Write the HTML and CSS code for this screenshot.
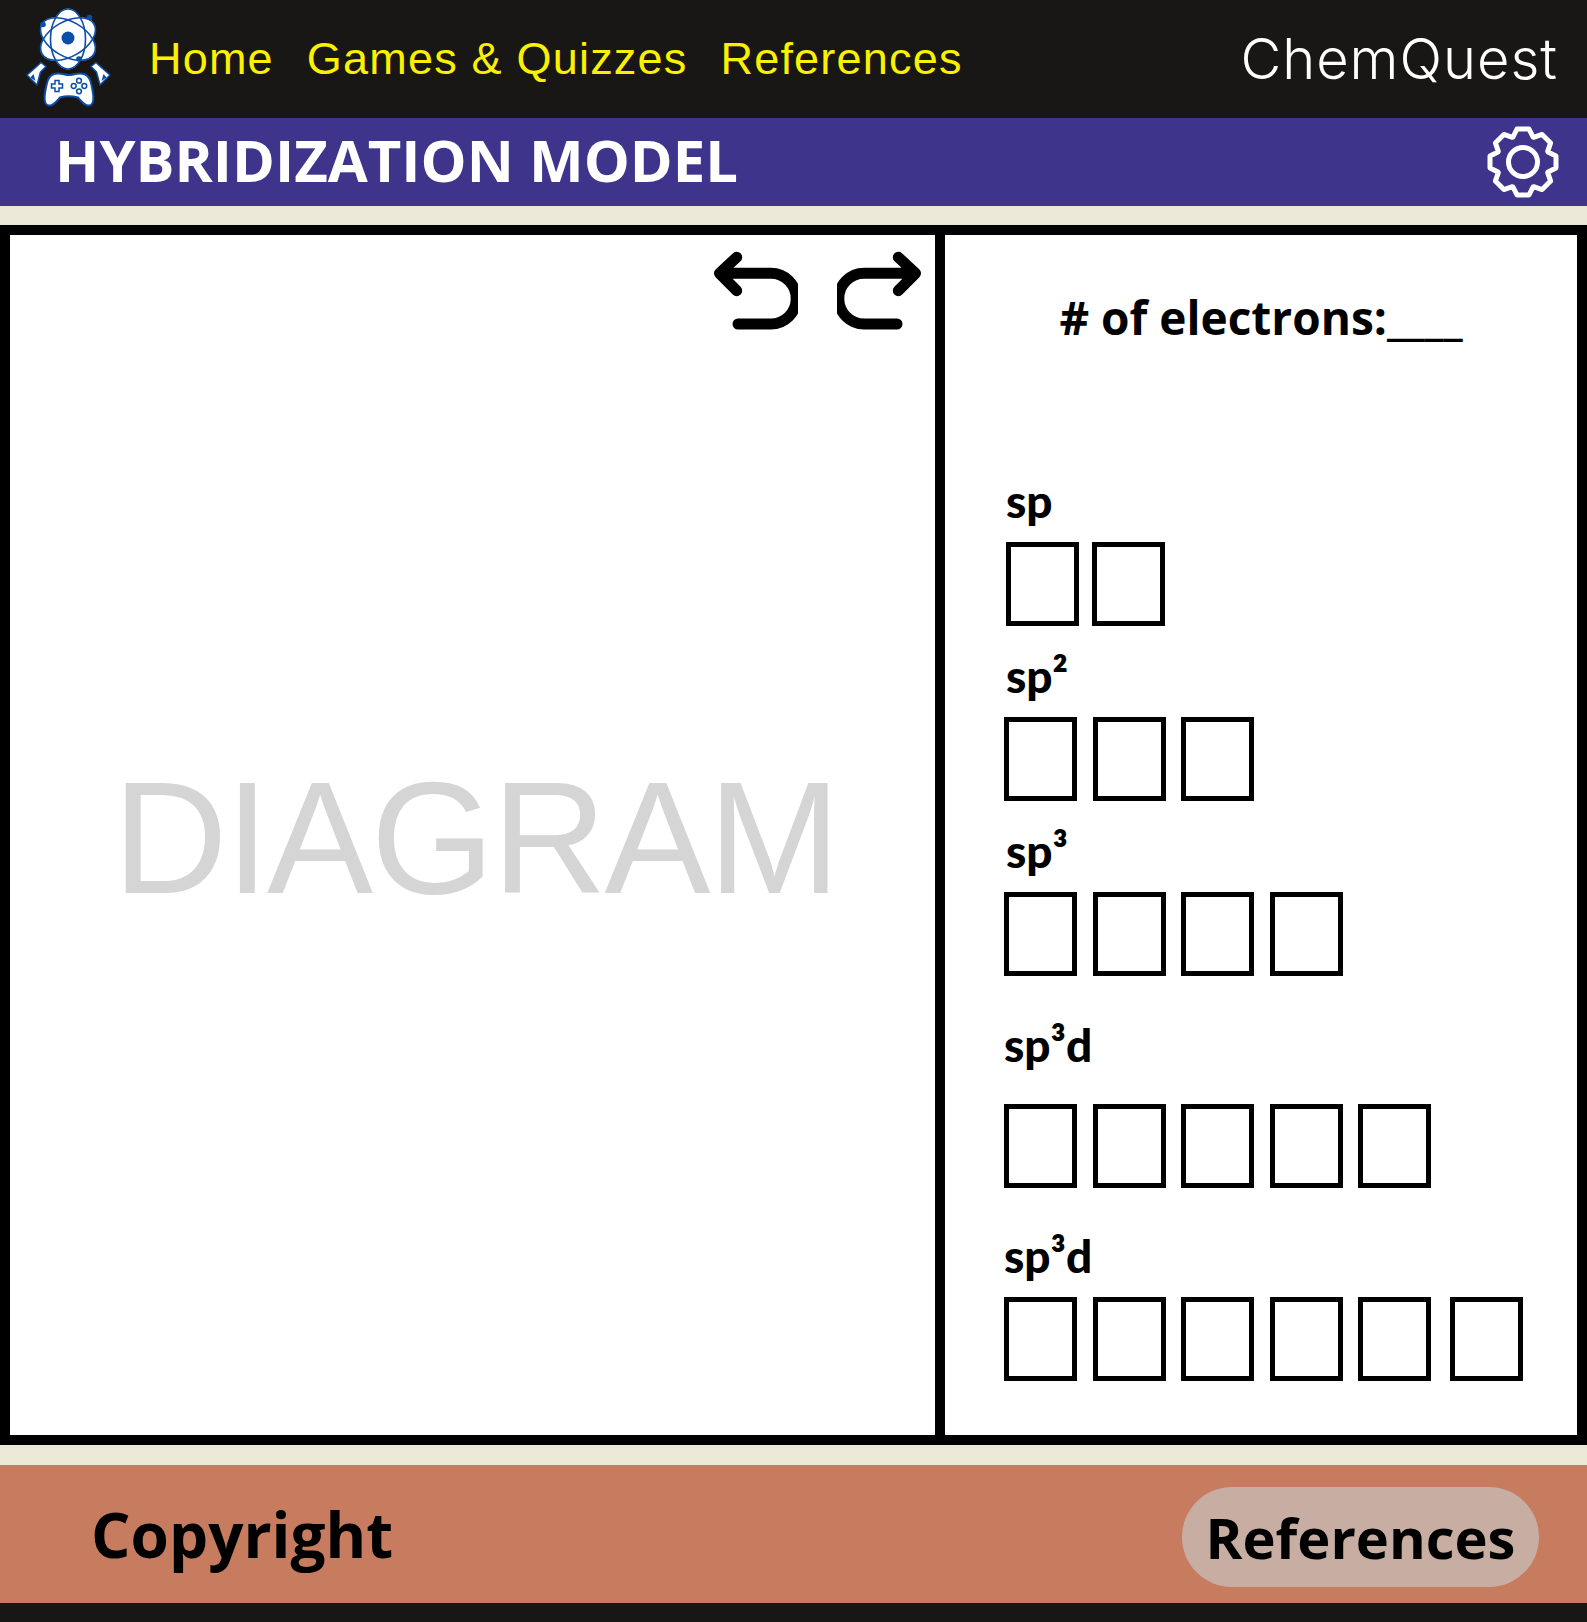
FILE: index.html
```html
<!DOCTYPE html>
<html lang="en">
<head>
  <meta charset="UTF-8">
  <meta name="viewport" content="width=device-width, initial-scale=1.0">
  <title>ChemQuest - Hybridization Model</title>
  <link rel="stylesheet" href="styles.css">
</head>
<body>
  <header class="topbar">
    <svg class="logo" viewBox="0 0 130 118" aria-label="ChemQuest logo">
      <!-- atom: fills first, then all three orbits on top -->
      <g fill="#fff" stroke="#fff" stroke-width="1">
        <ellipse cx="68" cy="39" rx="17.500" ry="30"/>
        <ellipse cx="68" cy="39" rx="17.500" ry="30" transform="rotate(60 68 39)"/>
        <ellipse cx="68" cy="39" rx="17.500" ry="30" transform="rotate(120 68 39)"/>
      </g>
      <g fill="none" stroke="#0b4ea8" stroke-width="1.600">
        <ellipse cx="68" cy="39" rx="17.500" ry="30"/>
        <ellipse cx="68" cy="39" rx="17.500" ry="30" transform="rotate(60 68 39)"/>
        <ellipse cx="68" cy="39" rx="17.500" ry="30" transform="rotate(120 68 39)"/>
      </g>
      <g fill="#0b4ea8">
        <circle cx="68" cy="38" r="6.500"/>
        <circle cx="43" cy="24.500" r="2.800"/>
        <circle cx="89.500" cy="17.500" r="2.800"/>
        <circle cx="79" cy="59" r="2.800"/>
      </g>
      <!-- flasks -->
      <g fill="#fff" stroke="#0b4ea8" stroke-width="1.500" stroke-linejoin="round">
        <path d="M41 62.500 L46 66.500 L40.500 72 L37 85 L27 75 L34.500 68.500 Z"/>
        <path d="M96 62.500 L91 66.500 L96.500 72 L100 85 L110 75 L102.500 68.500 Z"/>
      </g>
      <path d="M33.500 74 l-3 3.500 l5 3.500 Z M103.500 74 l3 3.500 l-5 3.500 Z" fill="#0b4ea8"/>
      <!-- controller -->
      <path d="M54 74 C60 72 64 75 69 75 C74 75 78 72 84 74 C90 76 91 82 92.500 90 C94 98 94 105 89 105.500 C85 106 82 102 78 97.500 C72 96 65 96 60 97.500 C56 102 53 106 49 105.500 C44 105 44 98 45.500 90 C47 82 48 76 54 74 Z" fill="#fff" stroke="#0b4ea8" stroke-width="2"/>
      <path d="M55 80.500 h4 v3.500 h3.500 v4 h-3.500 v3.500 h-4 v-3.500 h-3.500 v-4 h3.500 Z" fill="#fff" stroke="#0b4ea8" stroke-width="1.500"/>
      <g fill="#fff" stroke="#0b4ea8" stroke-width="1.500">
        <circle cx="79" cy="80.700" r="2.400"/>
        <circle cx="73.700" cy="86" r="2.400"/>
        <circle cx="84.300" cy="86" r="2.400"/>
        <circle cx="79" cy="91.300" r="2.400"/>
      </g>
    </svg>
    <nav class="main-nav">
      <a href="#">Home</a>
      <a href="#">Games &amp; Quizzes</a>
      <a href="#">References</a>
    </nav>
    <div class="brand">ChemQuest</div>
  </header>

  <div class="titlebar">
    <h1>HYBRIDIZATION MODEL</h1>
    <svg class="gear" viewBox="-37 -37 74 74" aria-label="Settings">
      <polygon points="-10,-25 -6,-33 6,-33 10,-25 10.600,-24.700 19.100,-27.600 27.600,-19.100 24.700,-10.600 25,-10 33,-6 33,6 25,10 24.700,10.600 27.600,19.100 19.100,27.600 10.600,24.700 10,25 6,33 -6,33 -10,25 -10.600,24.700 -19.100,27.600 -27.600,19.100 -24.700,10.600 -25,10 -33,6 -33,-6 -25,-10 -24.700,-10.600 -27.600,-19.100 -19.100,-27.600 -10.600,-24.700"/>
      <circle r="14.500"/>
    </svg>
  </div>

  <main class="workspace">
    <section class="diagram-panel">
      <div class="history-tools">
        <svg class="history-icon" viewBox="0 0 90 80"><path d="M28.700 7.300 L11.500 23.300 L28.700 40.700 M11.500 23.300 H62.850 A25.350 25.350 0 0 1 62.850 74 H30"/></svg>
        <svg class="history-icon" viewBox="0 0 90 80"><path d="M61.300 7.300 L78.500 23.300 L61.300 40.700 M78.500 23.300 H27.150 A25.350 25.350 0 0 0 27.150 74 H60"/></svg>
      </div>
      <div class="diagram-label">DIAGRAM</div>
    </section>

    <section class="orbital-panel">
      <h2 class="electron-count"># of electrons:____</h2>

      <div class="orbital-group orbital-group-indent">
        <div class="orbital-name">sp</div>
        <div class="orbital-boxes orbital-boxes-tight">
          <span class="box"></span><span class="box"></span>
        </div>
      </div>
      <div class="orbital-group">
        <div class="orbital-name orbital-name-indent">sp²</div>
        <div class="orbital-boxes">
          <span class="box"></span><span class="box"></span><span class="box"></span>
        </div>
      </div>
      <div class="orbital-group">
        <div class="orbital-name orbital-name-indent">sp³</div>
        <div class="orbital-boxes">
          <span class="box"></span><span class="box"></span><span class="box"></span><span class="box"></span>
        </div>
      </div>
      <div class="orbital-group orbital-group-wide">
        <div class="orbital-name orbital-name-spaced">sp³d</div>
        <div class="orbital-boxes">
          <span class="box"></span><span class="box"></span><span class="box"></span><span class="box"></span><span class="box"></span>
        </div>
      </div>
      <div class="orbital-group orbital-group-wide">
        <div class="orbital-name">sp³d</div>
        <div class="orbital-boxes">
          <span class="box"></span><span class="box"></span><span class="box"></span><span class="box"></span><span class="box"></span><span class="box box-last"></span>
        </div>
      </div>
    </section>
  </main>

  <footer class="footer">
    <div class="copyright">Copyright</div>
    <a class="references-btn" href="#">References</a>
  </footer>
  <div class="bottom-strip"></div>
</body>
</html>
```

FILE: styles.css
```css
* {
  box-sizing: border-box;
}
body {
  margin: 0;
  width: 1587px;
  height: 1622px;
  background-color: #ebe8d8;
  font-family: "Open Sans", sans-serif;
  display: flex;
  flex-direction: column;
  overflow: hidden;
}
a {
  color: inherit;
  text-decoration: none;
}

/* top bar */
.topbar {
  height: 118px;
  flex: none;
  background-color: #181716;
  display: flex;
  align-items: center;
  padding-right: 29px;
}
.logo {
  width: 130px;
  height: 118px;
  flex: none;
}
.main-nav {
  display: flex;
  gap: 33px;
  margin-left: 19px;
  color: #fbf000;
  font-family: "Liberation Sans", sans-serif;
  font-size: 45px;
  letter-spacing: 1.2px;
}
.brand {
  margin-left: auto;
  color: white;
  font-family: "Inter", sans-serif;
  font-size: 56px;
  font-weight: 300;
  letter-spacing: 1px;
}

/* title */
.titlebar {
  height: 88px;
  flex: none;
  background-color: #3e348b;
  display: flex;
  align-items: center;
  justify-content: space-between;
  padding: 0 27px 0 55px;
}
.titlebar h1 {
  margin: 0 0 6px;
  color: white;
  font-size: 58px;
  font-weight: 700;
}
.gear {
  width: 74px;
  height: 74px;
  fill: none;
  stroke: white;
  stroke-width: 5;
  stroke-linejoin: round;
}

/* main area */
.workspace {
  height: 1220px;
  flex: none;
  margin-top: 19px;
  background-color: black;
  border: 10px solid black;
  display: flex;
  gap: 10px;
}
.diagram-panel {
  width: 925px;
  flex: none;
  position: relative;
  background-color: white;
  display: flex;
  align-items: center;
  justify-content: center;
  padding: 6px 0 0 6px;
}
.history-tools {
  position: absolute;
  top: 15px;
  right: 8px;
  display: flex;
  gap: 39px;
}
.history-icon {
  width: 90px;
  height: 80px;
  fill: none;
  stroke: black;
  stroke-width: 11;
  stroke-linecap: round;
  stroke-linejoin: round;
}
.diagram-label {
  color: #d5d5d6;
  font-family: "Liberation Sans", sans-serif;
  font-size: 159px;
  line-height: 1;
  letter-spacing: -2.4px;
}
.orbital-panel {
  flex: 1;
  background-color: white;
  padding-top: 52px;
  padding-left: 59px;
  font-family: "Lato", sans-serif;
}
.electron-count {
  margin: 0 0 134px -59px;
  height: 60px;
  line-height: 60px;
  text-align: center;
  font-family: "Open Sans", sans-serif;
  font-size: 46px;
  font-weight: 700;
}
.orbital-group {
  margin-bottom: 30px;
}
.orbital-group-indent {
  padding-left: 2px;
}
.orbital-group-wide {
  margin-top: 48.5px;
}
.orbital-name {
  height: 40px;
  line-height: 40px;
  margin-bottom: 21px;
  font-size: 46px;
  font-weight: 900;
}
.orbital-name-indent {
  padding-left: 2px;
}
.orbital-name-spaced {
  margin-bottom: 39px;
}
.orbital-boxes {
  display: flex;
  gap: 15.5px;
}
.orbital-boxes-tight {
  gap: 13px;
}
.box {
  width: 73px;
  height: 84px;
  border: 5px solid black;
}
.box-last {
  margin-left: 3px;
}

/* footer */
.footer {
  height: 138px;
  flex: none;
  margin-top: 20px;
  background-color: #c77b5f;
  display: flex;
  align-items: center;
  justify-content: space-between;
  padding: 0 48px 0 91px;
}
.copyright {
  font-size: 62px;
  font-weight: 700;
}
.references-btn {
  width: 357px;
  height: 100px;
  margin-top: 6px;
  border-radius: 50px;
  background-color: #c8aea2;
  display: flex;
  align-items: center;
  justify-content: center;
  font-size: 56px;
  font-weight: 700;
}
.bottom-strip {
  flex: 1;
  background-color: #181716;
}
```
